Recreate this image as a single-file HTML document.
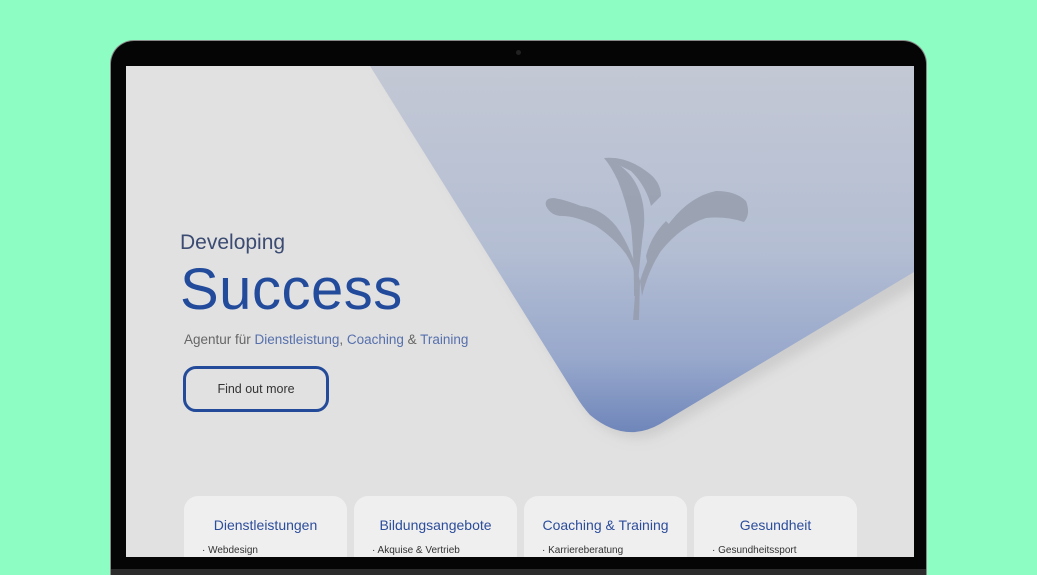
<!DOCTYPE html>
<html><head><meta charset="utf-8"><style>
*{margin:0;padding:0;box-sizing:border-box}
html,body{width:1037px;height:575px;overflow:hidden}
body{background:#8dfdc3;position:relative;font-family:"Liberation Sans",sans-serif}
.lap{position:absolute;left:110px;top:40px;width:817px;height:535px;background:#050505;border-radius:24px 24px 0 0;border:1px solid #888;border-bottom:none}
.screen{position:absolute;left:126px;top:66px;width:788px;height:491px;background:#e1e1e1;overflow:hidden}
.base{position:absolute;left:111px;top:569px;width:815px;height:6px;background:#2b2b2b}
.cam{position:absolute;left:516px;top:50px;width:5px;height:5px;border-radius:50%;background:#222}
.t{position:absolute;white-space:nowrap}
.card{position:absolute;top:430px;width:163px;height:80px;background:#efefef;border-radius:14px}
.card h3{font-weight:normal;font-size:14px;color:#2c4d9c;text-align:center;margin-top:21px}
.card p{font-size:10px;color:#333;margin:12px 0 0 18px}
</style></head><body>
<div class="lap"></div>
<div class="cam"></div>
<div class="screen">
<svg width="788" height="491" style="position:absolute;left:0;top:0">
<defs>
<linearGradient id="g" x1="0" y1="0" x2="0" y2="1">
<stop offset="0" stop-color="#c3c8d4"/><stop offset="0.5" stop-color="#b4bed3"/><stop offset="0.8" stop-color="#98a8cc"/><stop offset="1" stop-color="#6f86ba"/></linearGradient>
<filter id="s"><feGaussianBlur stdDeviation="6"/></filter>
</defs>
<path d="M250,0 L788,0 L788,212 L534,358 Q499,378 464,349 Q456,340 450,330 Z" fill="#b8b8b8" opacity="0.5" filter="url(#s)" transform="translate(6,6)"/>
<path d="M244,0 L788,0 L788,206 L534,358 Q499,378 464,349 Q456,340 450,330 Z" fill="url(#g)"/>
<g fill="#959cab" opacity="0.8">
<path d="M507,254 L510,215 Q508,200 500,188 Q488,172 470,160 Q450,150 436,150 Q425,150 420,140 Q418,132 428,132 Q440,134 455,140 Q475,142 490,160 Q505,180 514,215 L513,254 Z"/>
<path d="M511,230 Q514,190 518,160 Q520,130 505,110 Q492,95 478,92 Q485,100 492,115 Q500,135 505,160 Q508,190 508,230 Z"/>
<path d="M478,92 Q500,90 520,105 Q535,115 535,130 L525,140 Q520,120 505,105 Z"/>
<path d="M514,215 Q525,180 545,155 Q565,130 590,125 Q610,125 620,135 Q625,148 618,156 Q600,150 580,152 Q555,160 535,185 Q522,205 516,230 Z"/>
<path d="M520,190 Q525,170 540,155 L545,160 Q530,175 522,200 Z"/>
</g>
</svg>
<div class="t" style="left:54px;top:165px;font-size:21px;color:#3b4b72">Developing</div>
<div class="t" style="left:54px;top:190px;font-size:58px;color:#234b9c;letter-spacing:0.5px">Success</div>
<div class="t" style="left:58px;top:266px;font-size:13.5px;color:#666">Agentur für <span style="color:#5670ad">Dienstleistung</span>, <span style="color:#5670ad">Coaching</span> &amp; <span style="color:#5670ad">Training</span></div>
<div style="position:absolute;left:57px;top:300px;width:146px;height:46px;border:3px solid #244b9a;border-radius:13px;font-size:12.5px;color:#333;text-align:center;line-height:40px">Find out more</div>
<div class="card" style="left:58px"><h3>Dienstleistungen</h3><p>· Webdesign</p></div>
<div class="card" style="left:228px"><h3>Bildungsangebote</h3><p>· Akquise &amp; Vertrieb</p></div>
<div class="card" style="left:398px"><h3>Coaching &amp; Training</h3><p>· Karriereberatung</p></div>
<div class="card" style="left:568px"><h3>Gesundheit</h3><p>· Gesundheitssport</p></div>
</div>
<div class="base"></div>
</body></html>
